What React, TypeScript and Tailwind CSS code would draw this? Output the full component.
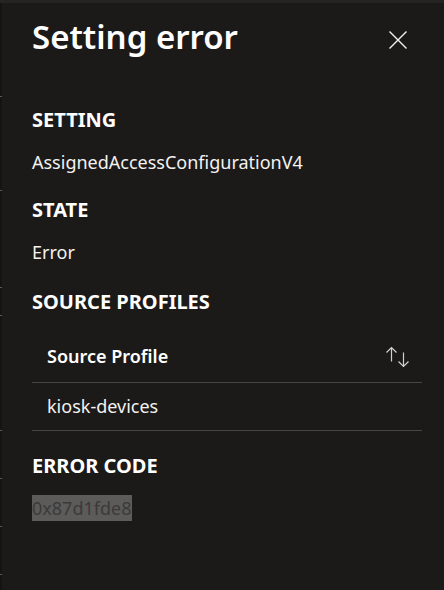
const font = { fontFamily: '"Segoe UI", "Noto Sans", "Open Sans", sans-serif' };

function Label({ children, className = "" }: { children: string; className?: string }) {
  return <h3 className={`text-[20px] font-bold leading-[28px] text-white ${className}`}>{children}</h3>;
}

function Value({ children, className = "" }: { children: string; className?: string }) {
  return <p className={`text-[18px] leading-[28px] text-[#f3f2f1] ${className}`}>{children}</p>;
}

function SortIcon() {
  return (
    <svg width="26" height="22" viewBox="0 0 26 22" fill="none" stroke="currentColor" strokeWidth="1.2">
      {/* up arrow */}
      <path d="M7.5 1.5v14M2.5 6.5l5-5 5 5" />
      {/* down arrow */}
      <path d="M19.5 6.5v14M14.5 15.5l5 5 5-5" />
    </svg>
  );
}

export default function App() {
  const ticks = [96, 190, 287, 315, 430, 478, 526, 574];
  return (
    <div className="relative h-[590px] w-[444px] overflow-hidden bg-[#1b1a19]" style={font}>
      <div className="h-[3px] w-full bg-[#252423]" />
      <div className="absolute left-0 top-[3px] h-full w-[2px] bg-[#151413]">
        {ticks.map((t) => (
          <div key={t} className="absolute left-0 h-px w-[2px] bg-[#5c5b5a]" style={{ top: t - 3 }} />
        ))}
      </div>

      <div className="flex items-start justify-between pl-[32px] pr-[37px] pt-[12px]">
        <h2 className="text-[33px] font-semibold leading-[44px] text-white">Setting error</h2>
        <button type="button" className="mt-[16px] text-[#f3f2f1]" aria-label="Close">
          <svg width="18" height="18" viewBox="0 0 18 18" fill="none" stroke="currentColor" strokeWidth="1.4">
            <path d="M0.5 0.5 17.5 17.5M17.5 0.5 0.5 17.5" />
          </svg>
        </button>
      </div>

      <div className="flex flex-col pl-[32px] pr-[22px] pt-[47px]">
        <Label>SETTING</Label>
        <Value className="mt-[14px]">AssignedAccessConfigurationV4</Value>
        <Label className="mt-[20px]">STATE</Label>
        <Value className="mt-[14px]">Error</Value>
        <Label className="mt-[22px]">SOURCE PROFILES</Label>

        <div className="mt-[15px] flex h-[52px] items-center justify-between border-b border-[#484644] pl-[15px] pr-[12px]">
          <span className="text-[18px] font-semibold text-white">Source Profile</span>
          <span className="text-[#d2d0ce]">
            <SortIcon />
          </span>
        </div>
        <div className="flex h-[48px] items-center border-b border-[#484644] pl-[15px]">
          <span className="text-[18px] text-[#f3f2f1]">kiosk-devices</span>
        </div>

        <Label className="mt-[21px]">ERROR CODE</Label>
        <div className="mt-[15px]">
          <span className="inline-block bg-[#5c5b5a] text-[18px] leading-[26px] text-[#3b3a39]">0x87d1fde8</span>
        </div>
      </div>
    </div>
  );
}
